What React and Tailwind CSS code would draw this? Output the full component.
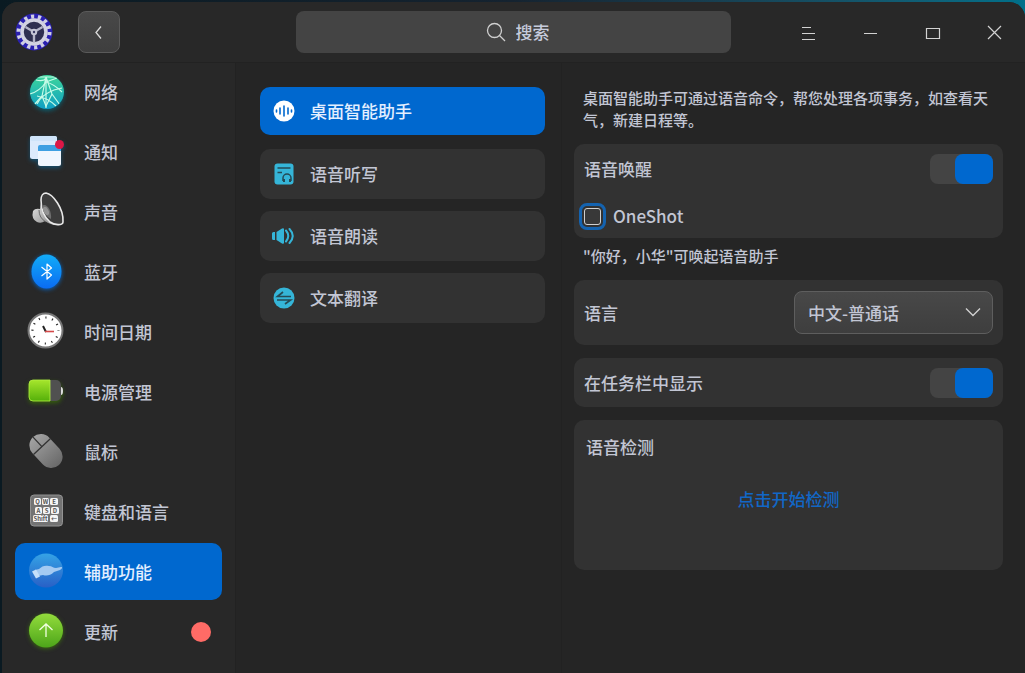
import { useState } from 'react';

// ─── Sidebar icons ────────────────────────────────────────────────────────────

const AppLogo = () => (
  <svg viewBox="0 0 40 40" className="size-10" aria-hidden="true">
    <circle cx="20" cy="20" r="18.5" fill="#2a20b0" />
    <circle cx="20" cy="20" r="15.5" fill="none" stroke="#cfcfe2" strokeWidth="4" strokeDasharray="3.2 3.757" />
    <circle cx="20" cy="20" r="12" fill="#2e2e50" stroke="#d2d2e2" strokeWidth="3.6" />
    <path d="M20 20v10M20 20l-8.5-5M20 20l8.5-5" stroke="#b4b4c8" strokeWidth="2.4" />
    <circle cx="20" cy="20" r="3.2" fill="#c5c5d6" />
    <circle cx="20" cy="20" r="1.2" fill="#3b3b66" />
  </svg>
);

const NetworkIcon = () => (
  <svg viewBox="0 0 40 40" className="size-10 drop-shadow-[0_2px_2px_#0c5c6c]" aria-hidden="true">
    <defs>
      <linearGradient id="net" x1="0" y1="0" x2="0" y2="1">
        <stop offset="0" stopColor="#3dd69a" />
        <stop offset="1" stopColor="#0f9fc4" />
      </linearGradient>
      <clipPath id="netClip"><circle cx="21" cy="20" r="17" /></clipPath>
    </defs>
    <circle cx="21" cy="20" r="17" fill="url(#net)" />
    <g clipPath="url(#netClip)" fill="none" stroke="#c6fbe8" strokeWidth="1.200">
      <path d="M10 5h22M10 8q8 2 10-2M20 5v31M20 5 16 24l-8 9M20 5l6 17 8 11" />
      <path d="M4 22q10-3 16-12 8 2 16 10M11 32q4-9 17-14l8-2M11 24q11 2 19 10M20 10 31 6M16 24l4 10 6-12" />
    </g>
  </svg>
);

const NoticeIcon = () => (
  <svg viewBox="0 0 40 40" className="size-10 drop-shadow-[0_2px_2px_#165070]" aria-hidden="true">
    <rect x="4" y="4" width="27" height="23" rx="2.500" fill="#dceafc" />
    <rect x="4" y="4" width="27" height="5" rx="2" fill="#cfe4fa" />
    <rect x="12" y="13" width="23" height="21" rx="2.500" fill="#f0f6fe" />
    <path d="M12 19v-4a2 2 0 0 1 2-2h19a2 2 0 0 1 2 2v4z" fill="#3e9fe2" />
    <circle cx="33.500" cy="12.500" r="4.500" fill="#dd1746" />
  </svg>
);

const SoundIcon = () => (
  <svg viewBox="0 0 40 40" className="size-10" aria-hidden="true">
    <defs>
      <linearGradient id="snd" x1="0" y1="0" x2="1" y2="1">
        <stop offset="0" stopColor="#f2f2f2" />
        <stop offset="1" stopColor="#777" />
      </linearGradient>
    </defs>
    <path d="M7 19q2-3 7-2L16 5l18 28q-9 1-15-4-4 3-8 1-6-3-4-11z" fill="url(#snd)" />
    <path d="M13 18q0 8 7 12" fill="none" stroke="#6a6a6a" />
    <path d="M20 1C27 2 38 17 37 30c0 4-9 3-13 0C18 25 15 16 15 8c0-4 2-7 5-7z" fill="#3c3c3c" stroke="#e8e8e8" strokeWidth="1.600" />
    <path d="M16 14c4-4 10 4 9 13-5-2-8-8-9-13z" fill="#6e6e6e" />
    <ellipse cx="20" cy="19" rx="2.500" ry="4.500" transform="rotate(-25 20 19)" fill="#939393" />
  </svg>
);

const BluetoothIcon = () => (
  <svg viewBox="0 0 40 40" className="size-10 drop-shadow-[0_1px_2px_#0765c4]" aria-hidden="true">
    <defs>
      <linearGradient id="bt" x1="0" y1="0" x2="0" y2="1">
        <stop offset="0" stopColor="#12acf8" />
        <stop offset="1" stopColor="#0a6cf2" />
      </linearGradient>
    </defs>
    <ellipse cx="20.500" cy="19.500" rx="15" ry="17" fill="url(#bt)" />
    <path d="m15.500 15 10 8-4.500 4v-15l4.500 4-10 8" fill="none" stroke="#fff" strokeWidth="1.200" strokeLinejoin="round" />
  </svg>
);

const ClockIcon = () => (
  <svg viewBox="0 0 40 40" className="size-10" aria-hidden="true">
    <circle cx="19.500" cy="18.500" r="17" fill="#fff" stroke="#777" strokeWidth="2" />
    <circle cx="19.500" cy="18.500" r="13" fill="none" stroke="#222" strokeWidth="2.200" strokeDasharray="1.100 5.707" strokeDashoffset=".5" />
    <path d="m20 20-3-6" stroke="#222" strokeWidth="2" />
    <path d="M19 19.500h9" stroke="#d44a4a" strokeWidth="1.600" />
  </svg>
);

const PowerIcon = () => (
  <svg viewBox="0 0 40 40" className="size-10 drop-shadow-[0_2px_2px_#35600a]" aria-hidden="true">
    <defs>
      <linearGradient id="pow" x1="0" y1="0" x2="0" y2="1">
        <stop offset="0" stopColor="#a6e62c" />
        <stop offset="1" stopColor="#55b00a" />
      </linearGradient>
    </defs>
    <rect x="3" y="8" width="32" height="21" rx="5" fill="#505050" />
    <path d="M35 15q2 0 2 4t-2 4z" fill="#ddd" />
    <path d="M7 8h17v21H7q-4 0-4-4V12q0-4 4-4z" fill="url(#pow)" stroke="#b4f044" strokeWidth=".8" />
  </svg>
);

const MouseIcon = () => (
  <svg viewBox="0 0 40 40" className="size-10" aria-hidden="true">
    <defs>
      <linearGradient id="mou" x1="0" y1="0" x2="0" y2="1">
        <stop offset="0" stopColor="#a2a2a2" />
        <stop offset="1" stopColor="#6a6a6a" />
      </linearGradient>
    </defs>
    <g transform="rotate(-43 20 19)">
      <rect x="8.500" y="0" width="23" height="38" rx="11.500" fill="url(#mou)" />
      <path d="M8.500 13h23M20 0v13" stroke="#333" strokeWidth="1.300" />
    </g>
  </svg>
);

const KEYS = [
  { x: 8, y: 6, w: 7, c: 'Q' },
  { x: 16, y: 6, w: 7, c: 'W' },
  { x: 24, y: 6, w: 8, c: 'E' },
  { x: 9, y: 15, w: 7, c: 'A' },
  { x: 17, y: 15, w: 7, c: 'S' },
  { x: 25, y: 15, w: 8, c: 'D' },
  { x: 7, y: 23, w: 15, c: 'Shift' },
  { x: 24, y: 23, w: 8, c: '←' },
];

const KeyboardIcon = () => (
  <svg viewBox="0 0 40 40" className="size-10" aria-hidden="true">
    <rect x="4.500" y="3" width="32" height="31" rx="3.500" fill="#737373" stroke="#929292" />
    {KEYS.map((k) => (
      <g key={k.c}>
        <rect x={k.x} y={k.y} width={k.w} height="7" rx="1.500" fill="#f4f4f4" />
        <text x={k.x + k.w / 2} y={k.y + 6} textAnchor="middle" fontSize="6" fontWeight="700" fill="#555">{k.c}</text>
      </g>
    ))}
  </svg>
);

const AssistIcon = () => (
  <svg viewBox="0 0 40 40" className="size-10" aria-hidden="true">
    <defs>
      <linearGradient id="ast" x1="0" y1="0" x2="0" y2="1">
        <stop offset="0" stopColor="#35a3e6" />
        <stop offset="1" stopColor="#2860c6" />
      </linearGradient>
    </defs>
    <circle cx="20" cy="18.500" r="17" fill="url(#ast)" />
    <path d="m9 18 4-1c3-3 6-4 10-3 3 0 4 2 7 2l5-1c2 0 1 2-1 3l-6 2c-4 4-8 4-11 3l-5 1z" fill="#a4caf2" />
    <path d="m6 19.500 4-2 4 7-4 2z" fill="#c6e0fa" />
  </svg>
);

const UpdateIcon = () => (
  <svg viewBox="0 0 40 40" className="size-10 drop-shadow-[0_1px_2px_#3c6c10]" aria-hidden="true">
    <defs>
      <linearGradient id="upd" x1="0" y1="0" x2="0" y2="1">
        <stop offset="0" stopColor="#93dc3c" />
        <stop offset="1" stopColor="#4da51a" />
      </linearGradient>
    </defs>
    <circle cx="20" cy="18.500" r="17" fill="url(#upd)" />
    <path d="M20 25V12M13.500 18l6.500-6 6.500 6" fill="none" stroke="#f2ffe2" strokeWidth="1.300" />
  </svg>
);

// ─── Feature icons ────────────────────────────────────────────────────────────

const AssistantGlyph = () => (
  <svg viewBox="0 0 24 24" className="size-6" aria-hidden="true">
    <circle cx="12" cy="12" r="10.500" fill="#fff" />
    <path d="M4.500 11v2M8 9v6M12 7v10M16 9v6M19.500 11v2" stroke="#0068cf" strokeWidth="1.600" strokeLinecap="round" />
  </svg>
);

const DictationGlyph = () => (
  <svg viewBox="0 0 24 24" className="size-6" aria-hidden="true">
    <rect x="2.500" y="1.500" width="19" height="21" rx="3" fill="#35b5d8" />
    <path d="M5.500 6h13M5.500 10.500h4.500" stroke="#254a55" strokeWidth="1.700" />
    <path d="M11 19v-3a4 4 0 0 1 8 0v3" fill="none" stroke="#254a55" strokeWidth="1.500" />
    <path d="M11 17h2v3h-2zM17 17h2v3h-2z" fill="#254a55" />
  </svg>
);

const ReadGlyph = () => (
  <svg viewBox="0 0 24 24" className="size-6" aria-hidden="true">
    <path d="M0 9.500q0-1.500 1.500-1.500H3v8H1.500Q0 16 0 14.500zM4.500 8 10 4.500q2-1 2 1v13q0 2-2 1L4.500 16z" fill="#35b5d8" />
    <path d="M14 6.500q4.500 5.500 0 11M17.500 5q6.500 7 0 14" fill="none" stroke="#35b5d8" strokeWidth="2" strokeLinecap="round" />
  </svg>
);

const TranslateGlyph = () => (
  <svg viewBox="0 0 24 24" className="size-6" aria-hidden="true">
    <circle cx="12" cy="12" r="10.500" fill="#35b5d8" />
    <path d="M19 10.500H5.500L11 6M5 14h13.500L13 18" fill="none" stroke="#254a55" strokeWidth="1.700" />
  </svg>
);

// ─── Data ─────────────────────────────────────────────────────────────────────

const SECTIONS = [
  { id: 'network', label: '网络', Icon: NetworkIcon },
  { id: 'notice', label: '通知', Icon: NoticeIcon },
  { id: 'sound', label: '声音', Icon: SoundIcon },
  { id: 'bluetooth', label: '蓝牙', Icon: BluetoothIcon },
  { id: 'datetime', label: '时间日期', Icon: ClockIcon },
  { id: 'power', label: '电源管理', Icon: PowerIcon },
  { id: 'mouse', label: '鼠标', Icon: MouseIcon },
  { id: 'keyboard', label: '键盘和语言', Icon: KeyboardIcon },
  { id: 'assist', label: '辅助功能', Icon: AssistIcon },
  { id: 'update', label: '更新', Icon: UpdateIcon, badge: true },
];

const FEATURES = [
  { id: 'assistant', label: '桌面智能助手', Icon: AssistantGlyph },
  { id: 'dictation', label: '语音听写', Icon: DictationGlyph },
  { id: 'read', label: '语音朗读', Icon: ReadGlyph },
  { id: 'translate', label: '文本翻译', Icon: TranslateGlyph },
];

// ─── Title bar ────────────────────────────────────────────────────────────────

const WINDOW_BUTTONS = [
  { label: '菜单', d: 'M4 5.500h9M4 11.500h13M4 17.500h13' },
  { label: '最小化', d: 'M4 11.500h13' },
  { label: '最大化', d: 'M4.500 6.500h13v10h-13z' },
  { label: '关闭', d: 'm4 4 13 13M17 4 4 17' },
];

const TitleBar = () => (
  <header className="flex h-[61px] shrink-0 items-center border-b border-[#222] bg-[#282828] pl-3">
    <AppLogo />
    <button
      type="button"
      aria-label="返回"
      className="ml-6 flex size-[42px] items-center justify-center rounded-lg border border-[#5a5a5a] bg-gradient-to-b from-[#484848] to-[#3e3e3e]"
    >
      <svg viewBox="0 0 16 16" className="size-4" fill="none" stroke="#dcdcdc" strokeWidth="1.300">
        <path d="m10 2.500-5 6 5 6" />
      </svg>
    </button>
    <label className="mr-[46px] ml-44 flex h-[42px] flex-1 items-center justify-center gap-[10px] rounded-lg bg-[#444] pl-[14px]">
      <svg viewBox="0 0 20 20" className="size-5" fill="none" stroke="#cfcfcf" strokeWidth="1.300" aria-hidden="true">
        <circle cx="8.500" cy="8.500" r="7" />
        <path d="m13.500 13.500 5.500 5.500" />
      </svg>
      <input
        type="text"
        aria-label="搜索"
        placeholder="搜索"
        className="w-10 bg-transparent outline-none placeholder:text-[#c6cbdc]"
      />
    </label>
    <div className="flex">
      {WINDOW_BUTTONS.map((b) => (
        <button key={b.label} type="button" aria-label={b.label} className="flex h-10 w-[62px] items-center justify-center">
          <svg viewBox="0 0 20 20" className="size-5" fill="none" stroke="#d2d2d2" strokeWidth="1.200">
            <path d={b.d} />
          </svg>
        </button>
      ))}
    </div>
  </header>
);

// ─── Sidebar ──────────────────────────────────────────────────────────────────

const Sidebar = ({ active, onSelect }) => (
  <nav className="border-r border-[#222] bg-[#282828] px-[13px]">
    <ul className="flex flex-col gap-[3px]">
      {SECTIONS.map(({ id, label, Icon, badge }) => (
        <li key={id}>
          <button
            type="button"
            onClick={() => onSelect(id)}
            className={`flex h-[57px] w-full items-center gap-[18px] rounded-[10px] pl-[11px] text-left ${active === id ? 'bg-[#0068cf] text-[#e4efff]' : ''}`}
          >
            <Icon />
            <span>{label}</span>
            {badge && <span className="mr-[11px] ml-auto size-5 rounded-full bg-[#ff6b66]" />}
          </button>
        </li>
      ))}
    </ul>
  </nav>
);

// ─── Feature list ─────────────────────────────────────────────────────────────

const FeatureList = ({ active, onSelect }) => (
  <section className="min-w-0 border-r border-[#222] pt-6 pr-4 pl-6">
    <ul className="flex flex-col gap-3">
      {FEATURES.map(({ id, label, Icon }) => (
        <li key={id} className="h-[50px]">
          <button
            type="button"
            onClick={() => onSelect(id)}
            className={`flex w-full items-center gap-[14px] rounded-[10px] pl-3 text-left ${active === id ? 'h-12 bg-[#0068cf] text-[#e4efff]' : 'h-[50px] bg-[#323232]'}`}
          >
            <Icon />
            <span>{label}</span>
          </button>
        </li>
      ))}
    </ul>
  </section>
);

// ─── Assistant panel ──────────────────────────────────────────────────────────

const Switch = ({ id, ...props }) => (
  <input
    id={id}
    type="checkbox"
    role="switch"
    className="h-[30px] w-[63px] appearance-none rounded-lg bg-[#444] before:block before:h-[30px] before:w-[38px] before:rounded-lg before:bg-[#777] checked:before:ml-auto checked:before:bg-[#0068cf]"
    {...props}
  />
);

const AssistantPanel = () => (
  <section className="min-w-0 pt-6 pr-[22px] pl-3">
    <p className="px-[9px] text-[15px] leading-[22px]">
      桌面智能助手可通过语音命令，帮您处理各项事务，如查看天气，新建日程等。
    </p>

    <div className="mt-[13px] h-[94px] rounded-[10px] bg-[#323232] px-[10px] pt-[10px]">
      <div className="flex h-[30px] items-center justify-between">
        <label htmlFor="wake">语音唤醒</label>
        <Switch id="wake" defaultChecked />
      </div>
      <label className="mt-5 flex h-6 items-center gap-3">
        <input
          type="checkbox"
          className="size-[17px] appearance-none rounded-[3px] border border-[#d0d0d0] bg-[#383838] outline-3 outline-offset-2 outline-[#1463b0]"
        />
        <span>OneShot</span>
      </label>
    </div>
    <p className="mt-[7px] px-[9px] text-[15px] leading-[22px]">"你好，小华"可唤起语音助手</p>

    <div className="mt-[13px] flex h-[65px] items-center justify-between rounded-[10px] bg-[#323232] px-[10px]">
      <label htmlFor="language">语言</label>
      <div className="relative">
        <select
          id="language"
          className="h-[43px] w-[199px] appearance-none rounded-lg border border-[#5e5e5e] bg-[#424242] bg-gradient-to-b from-[#484848] to-[#3e3e3e] pl-[13px] outline-none"
        >
          <option>中文-普通话</option>
        </select>
        <svg viewBox="0 0 16 16" className="pointer-events-none absolute top-[13px] right-3 size-4" fill="none" stroke="#d0d0d0" strokeWidth="1.400" aria-hidden="true">
          <path d="m1 4.500 7 7 7-7" />
        </svg>
      </div>
    </div>

    <div className="mt-[13px] flex h-[49px] items-center justify-between rounded-[10px] bg-[#323232] px-[10px]">
      <label htmlFor="taskbar">在任务栏中显示</label>
      <Switch id="taskbar" defaultChecked />
    </div>

    <div className="mt-[13px] flex h-[150px] flex-col rounded-[10px] bg-[#323232] px-3 pt-[14px]">
      <h2 className="leading-[26px]">语音检测</h2>
      <button type="button" className="mt-[26px] self-center leading-[26px] text-[#1167c6]">
        点击开始检测
      </button>
    </div>
  </section>
);

// ─── App ──────────────────────────────────────────────────────────────────────

const App = () => {
  const [section, setSection] = useState('assist');
  const [feature, setFeature] = useState('assistant');

  return (
    <div className="flex min-h-screen flex-col bg-gradient-to-r from-[#0a1a22] via-[#152330] to-[#00708a] pt-[2px] pl-[2px] font-['Noto_Sans_CJK_SC','Noto_Sans',sans-serif] text-[17px] leading-6 font-medium text-[#c2c6d4]">
      <div className="flex flex-1 flex-col overflow-hidden rounded-t-2xl bg-[#252525]">
        <TitleBar />
        <main className="grid flex-1 grid-cols-[234px_326fr_463fr]">
          <Sidebar active={section} onSelect={setSection} />
          <FeatureList active={feature} onSelect={setFeature} />
          <AssistantPanel />
        </main>
      </div>
    </div>
  );
};

export default App;
